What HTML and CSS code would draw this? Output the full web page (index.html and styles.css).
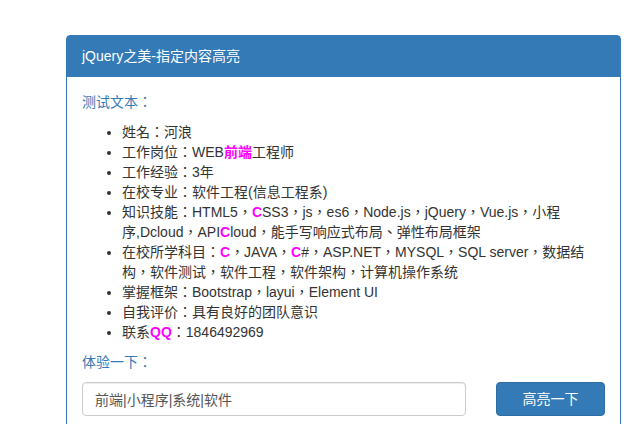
FILE: index.html
```html
<!DOCTYPE html>
<html lang="zh-CN">
  <head>
    <meta charset="UTF-8" />
    <meta name="viewport" content="width=device-width, initial-scale=1.0" />
    <title>jQuery之美-指定内容高亮</title>
    <link rel="stylesheet" href="styles.css">
  </head>
  <body>
    <div class="panel">
      <div class="panel-heading">
        <h3 class="panel-title">jQuery之美-指定内容高亮</h3>
      </div>
      <div class="panel-body">
        <p class="label">测试文本：</p>
        <ul class="resume">
          <li>姓名：河浪</li>
          <li>工作岗位：WEB<span class="hl">前端</span>工程师</li>
          <li>工作经验：3年</li>
          <li>在校专业：软件工程(信息工程系)</li>
          <li>知识技能：HTML5，<span class="hl">C</span>SS3，js，es6，Node.js，jQuery，Vue.js，小程序,Dcloud，API<span class="hl">C</span>loud，能手写响应式布局、弹性布局框架</li>
          <li>在校所学科目：<span class="hl">C</span>，JAVA，<span class="hl">C</span>#，ASP.NET，MYSQL，SQL server，数据结构，软件测试，软件工程，软件架构，计算机操作系统</li>
          <li>掌握框架：Bootstrap，layui，Element UI</li>
          <li>自我评价：具有良好的团队意识</li>
          <li>联系<span class="hl">QQ</span>：1846492969</li>
        </ul>
        <p class="label">体验一下：</p>
        <div class="try">
          <input class="form-control" type="text" value="前端|小程序|系统|软件">
          <button class="btn" type="button">高亮一下</button>
        </div>
      </div>
    </div>
  </body>
</html>
```

FILE: styles.css
```css
* {
  box-sizing: border-box;
}
body {
  margin: 0;
  /* 关掉 locl，全角冒号和逗号居中显示，且保留整格宽度 */
  font-family: "Liberation Sans", "Noto Sans CJK TC", sans-serif;
  font-feature-settings: "locl" 0;
  text-spacing-trim: space-all;
  font-size: 14px;
  line-height: 20px;
  color: #333;
  background: #fff;
}
.panel {
  width: 555px;
  margin: 35px 0 0 66px;
  border: 1px solid #337ab7;
  border-radius: 4px;
}
.panel-heading {
  padding: 10px 15px;
  background: #337ab7;
  color: #fff;
}
.panel-title {
  margin: 0;
  font-size: 14px;
  font-weight: normal;
  line-height: 21px;
}
.panel-body {
  padding: 15px;
}
.label {
  margin: 0 0 10px;
  color: #337ab7;
}
.resume {
  margin: 0 0 10px;
  padding: 0 14px 0 40px;
}
.hl {
  color: #f0f;
  font-weight: bold;
}
.try {
  display: grid;
  grid-template-columns: 1fr 109px;
  gap: 30px;
}
.form-control {
  height: 34px;
  padding: 6px 12px;
  font: inherit;
  color: #555;
  border: 1px solid #ccc;
  border-radius: 4px;
  box-shadow: inset 0 1px 1px rgba(0, 0, 0, .075);
}
.btn {
  height: 34px;
  font: inherit;
  color: #fff;
  background: #337ab7;
  border: 1px solid #2e6da4;
  border-radius: 4px;
}
```
